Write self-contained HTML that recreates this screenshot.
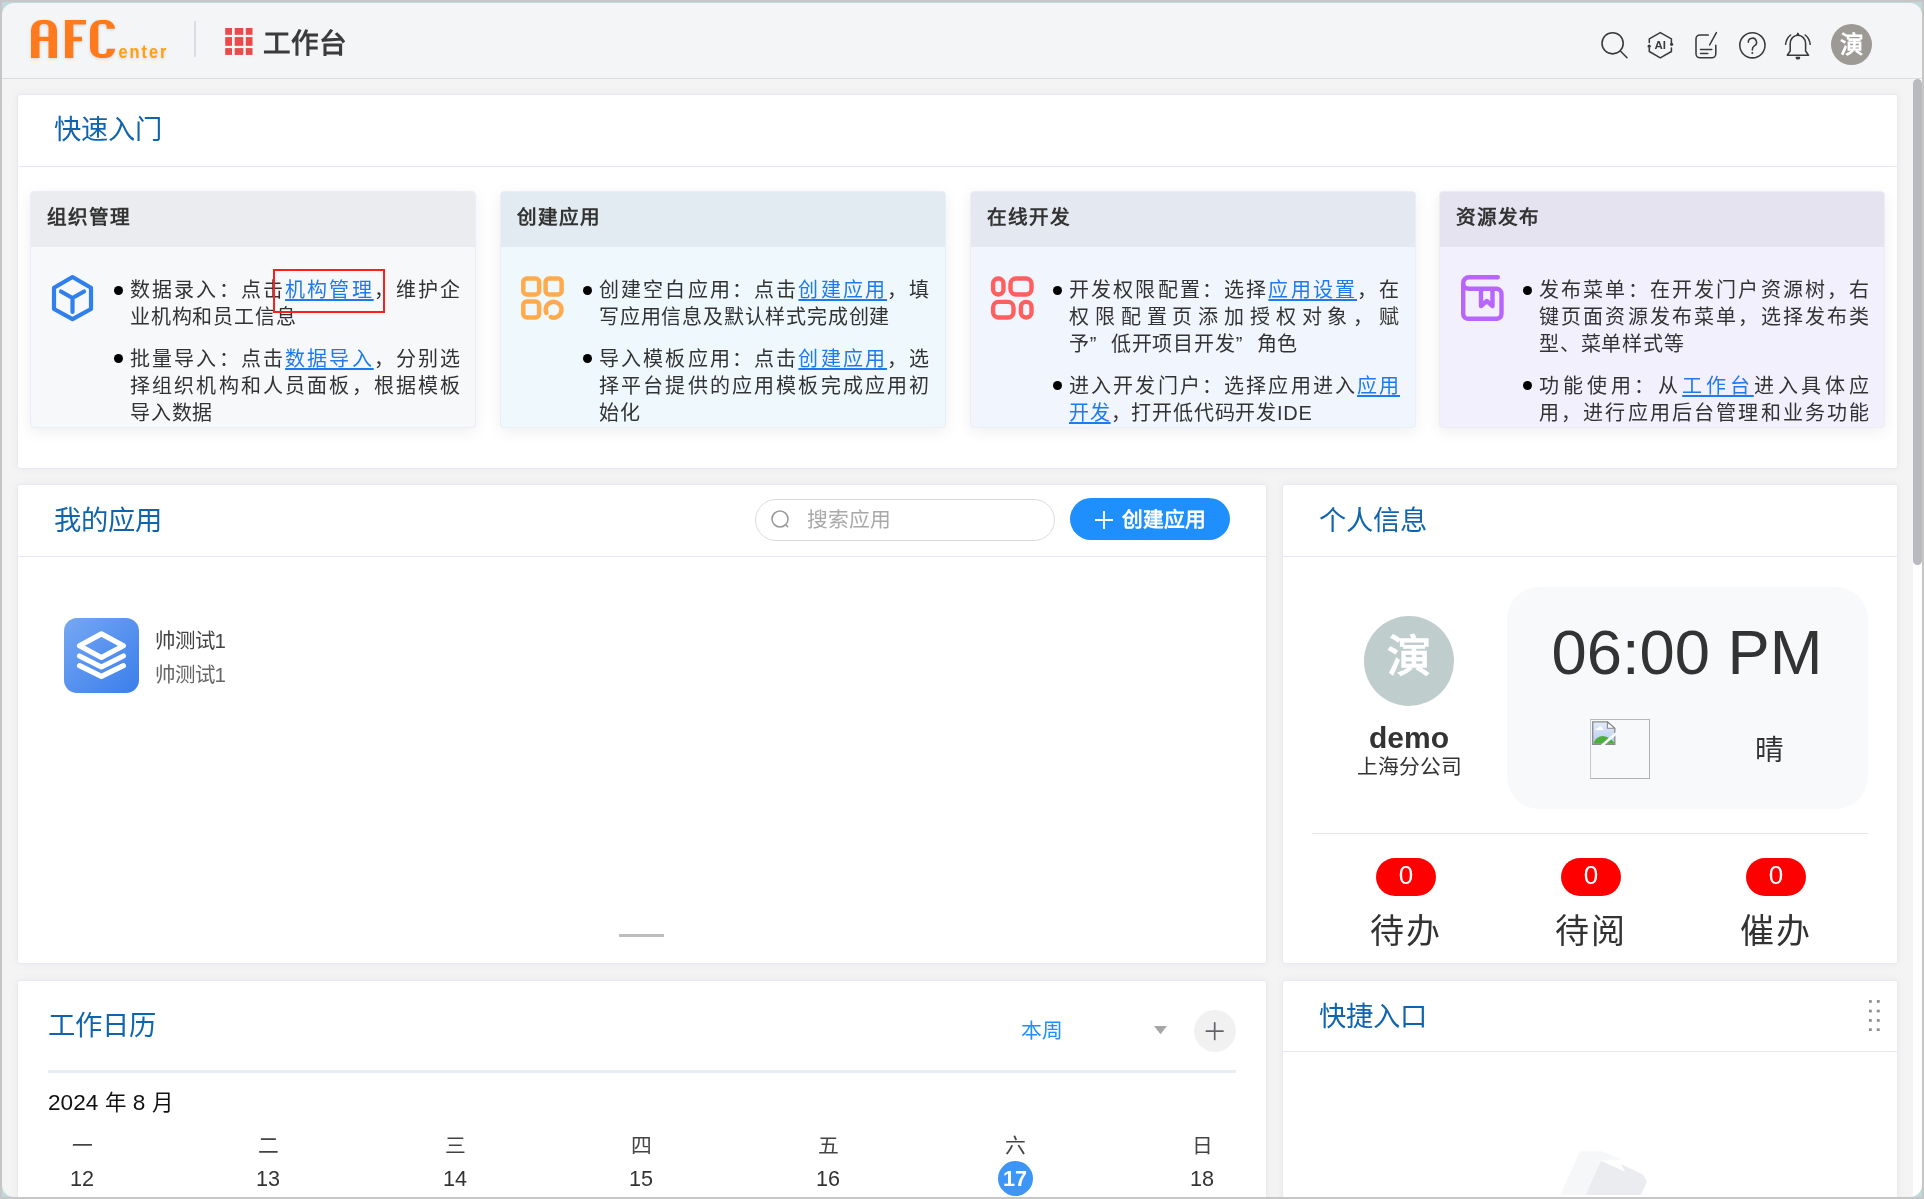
<!DOCTYPE html>
<html lang="zh-CN"><head><meta charset="utf-8">
<style>
*{box-sizing:border-box;margin:0;padding:0}
html,body{width:1924px;height:1199px;overflow:hidden;background:#c6c6c6;font-family:"Liberation Sans",sans-serif;color:#333}
.abs{position:absolute}
#win{position:absolute;left:2px;top:2px;width:1920px;height:1195px;background:#bfd9dc}
#inner{will-change:transform;position:absolute;left:0;top:0;width:1924px;height:1199px;background:#f4f4f4;clip-path:inset(3px 2px 2px 2px round 12px);overflow:hidden}
#hdr{position:absolute;left:0;top:0;width:1924px;height:79px;background:#f4f5f7;border-bottom:1px solid #dcdcdc;box-shadow:inset 0 4px 0 -1px #f7f7f7}
.panel{position:absolute;background:#fff;border:1px solid #e8eaf2;border-radius:3px;box-shadow:0 0 10px rgba(0,0,0,0.05)}
.ptitle{position:absolute;font-size:27.3px;line-height:30px;color:#0f64ae;white-space:nowrap}
.pline{position:absolute;height:1px;background:#e6e8f1}
.card{position:absolute;top:191px;width:446px;height:237px;border-radius:4px;overflow:hidden;box-shadow:0 4px 16px rgba(0,0,0,0.065);border:1px solid #eceef5}
.ch{position:absolute;left:0;top:0;right:0;height:55px;font-size:19.6px;letter-spacing:1px;font-weight:bold;line-height:51px;padding-left:16px;color:#333}
.txt{position:absolute;top:83px;width:331px;font-size:20px;letter-spacing:0.8px;line-height:27px;color:#333}
.ln{display:block;height:27px;white-space:nowrap;overflow:visible}
.j{text-align:justify;text-align-last:justify}
.gap{height:15px}
.q{display:inline-block;width:21px}
.bul{position:absolute;width:9px;height:9px;border-radius:50%;background:#000}
a{color:#1f7aee;text-decoration:underline;text-underline-offset:2.2px;text-decoration-thickness:2px}
</style></head><body>
<div id="win"></div>
<div id="inner">
  <div id="hdr">
    <svg class="abs" style="left:0;top:0;filter:drop-shadow(0 1px 1.5px rgba(0,0,0,0.13))" width="200" height="78" viewBox="0 0 200 78">
      <g fill="#ff7a1c">
        <path d="M31,58 V30 A10,10 0 0 1 41,20 H47 A10,10 0 0 1 57,30 V58 H48.5 V41 H39.5 V58 Z M39.5,36.7 H48.5 V28 A4,4 0 0 0 44.5,24 H43.5 A4,4 0 0 0 39.5,28 Z"/>
        <path d="M65,20 H86 V24.5 H73.3 V36.7 H82 V41.2 H73.3 V58 H65 Z"/>
        <path d="M100,20 H106 A9,9 0 0 1 115,29 V28.7 H106.7 V27 A3,3 0 0 0 103.7,24 H101.3 A3,3 0 0 0 98.3,27 V51 A3,3 0 0 0 101.3,54 H103.7 A3,3 0 0 0 106.7,51 V48.7 H115 V49 A9,9 0 0 1 106,58 H100 A10,10 0 0 1 90,48 V30 A10,10 0 0 1 100,20 Z"/>
      </g>
      <text transform="translate(118.5,58) scale(0.86,1)" x="0" y="0" font-family="Liberation Sans" font-weight="bold" font-size="19" fill="#ffa010" letter-spacing="2.3">enter</text>
    </svg>
    <div class="abs" style="left:194px;top:21px;width:2px;height:36px;background:#d9dbe6"></div>
    <svg class="abs" style="left:223px;top:26px" width="30" height="30" viewBox="0 0 30 30">
      <g fill="#e94b4b">
        <rect x="2.2" y="2" width="6.8" height="6.8"/><rect x="11.7" y="2" width="8.6" height="6.8"/><rect x="22.8" y="2" width="6.7" height="6.8"/>
        <rect x="2.2" y="11.1" width="6.8" height="8.7"/><rect x="11.7" y="11.1" width="8.6" height="8.7"/><rect x="22.8" y="11.1" width="6.7" height="8.7"/>
        <rect x="2.2" y="22.1" width="6.8" height="6.8"/><rect x="11.7" y="22.1" width="8.6" height="6.8"/><rect x="22.8" y="22.1" width="6.7" height="6.8"/>
      </g>
    </svg>
    <div class="abs" style="left:262.5px;top:26px;font-size:27.6px;line-height:36px;font-weight:bold;color:#3b3b3b;white-space:nowrap">工作台</div>
    <svg class="abs" style="left:1580px;top:0" width="340" height="78" viewBox="1580 0 340 78" fill="none" stroke="#3a3a3a" stroke-width="1.55" stroke-linecap="round" stroke-linejoin="round">
      <circle cx="1612.6" cy="43.3" r="10.6"/>
      <path d="M1620.6,51.3 L1627,57.7"/>
      <path d="M1649.3,42.5 V38.9 L1660.3,32.6 L1671.4,38.9 V43.5 M1671.4,48 V51.5 L1660.3,57.9 L1649.3,51.5 V48"/>
      <circle cx="1649.2" cy="46.2" r="1.6" fill="#3a3a3a" stroke="none"/>
      <circle cx="1671.6" cy="44.3" r="1.6" fill="#3a3a3a" stroke="none"/>
      <text x="1660.3" y="49" font-family="Liberation Sans" font-weight="bold" font-size="11.5" fill="#3a3a3a" stroke="none" text-anchor="middle">AI</text>
      <path d="M1708.3,35 H1700 A4,4 0 0 0 1696,39 V53.8 A4,4 0 0 0 1700,57.8 H1711.8 A4,4 0 0 0 1715.8,53.8 V45.2"/>
      <path d="M1709.6,45 L1716.4,32.6"/>
      <path d="M1700.5,49.5 H1711.8 M1700.5,53.4 H1707.8"/>
      <circle cx="1752.4" cy="45.3" r="12.6"/>
      <path d="M1748.3,42.3 A4.1,4.1 0 1 1 1754.3,45.9 C1752.9,46.8 1752.3,47.7 1752.3,49.9"/>
      <circle cx="1752.3" cy="52.9" r="1" fill="#3a3a3a" stroke="none"/>
      <path d="M1787.3,55.2 H1808.5 L1805.6,51 V43.5 A7.7,8.3 0 0 0 1790.2,43.5 V51 Z"/>
      <path d="M1796.9,35.3 L1797.9,33.4 L1798.9,35.3 Z" fill="#3a3a3a"/>
      <path d="M1796.3,57.4 A1.6,1.4 0 0 0 1799.5,57.4 Z" fill="#3a3a3a"/>
      <path d="M1785.6,44.3 A14,14 0 0 1 1790.6,35"/>
      <path d="M1810.2,44.3 A14,14 0 0 0 1805.2,35"/>
    </svg>
    <div class="abs" style="left:1831px;top:24px;width:41px;height:41px;border-radius:50%;background:#9d9994;color:#fff;font-size:23.5px;font-weight:bold;line-height:41px;text-align:center;text-indent:0px;padding-top:0.5px">演</div>
  </div>

  <!-- scrollbar -->
  <div class="abs" style="left:1913px;top:79px;width:9px;height:1120px;background:#fff"></div>
  <div class="abs" style="left:1913px;top:79px;width:9px;height:486px;background:#b9babf;border-radius:4.5px"></div>

  <!-- Panel 1 -->
  <div class="panel" style="left:17px;top:94px;width:1881px;height:375px"></div>
  <div class="ptitle" style="left:54px;top:115px">快速入门</div>
  <div class="pline" style="left:18px;top:166px;width:1879px"></div>

  <div class="card" style="left:30px;background:#f7f8fa">
    <div class="ch" style="background:#ebecef">组织管理</div>
  </div>
  <div class="card" style="left:500px;background:#eef8fd">
    <div class="ch" style="background:#e2ebf1">创建应用</div>
  </div>
  <div class="card" style="left:970px;background:#f1f5fd">
    <div class="ch" style="background:#e4e8f0">在线开发</div>
  </div>
  <div class="card" style="left:1439px;background:#f3f0fd">
    <div class="ch" style="background:#e5e3f0">资源发布</div>
  </div>

  <!-- card icons -->
  <svg class="abs" style="left:0;top:0" width="1924" height="440" fill="none" stroke-linejoin="round" stroke-linecap="round">
    <g stroke="#2f80ed" stroke-width="4.2">
      <path d="M72.5,277 L91,287.8 V309 L72.5,319.2 L54,309 V287.8 Z"/>
      <path d="M61,291.5 L72.5,298 L84,291.5 M72.5,298 V312"/>
    </g>
    <g stroke="#ffab4d" stroke-width="4.5">
      <rect x="523.3" y="278.6" width="15.8" height="15.9" rx="3.5"/>
      <rect x="545.6" y="278.6" width="16" height="15.9" rx="3.5"/>
      <rect x="523.3" y="301.6" width="15.8" height="15.9" rx="3.5"/>
      <path d="M546.4,313 A7.9,7.9 0 1 1 550.8,317.1"/>
    </g>
    <g stroke="#ff5f5f" stroke-width="4.4">
      <rect x="993.1" y="278.5" width="10.4" height="16" rx="5"/>
      <rect x="1010.5" y="278.5" width="21" height="16" rx="5.5"/>
      <rect x="993.1" y="301.9" width="20.4" height="15.6" rx="5.5"/>
      <rect x="1020.9" y="301.9" width="10.6" height="15.6" rx="5"/>
    </g>
    <g stroke="#b765fc" stroke-width="4.4">
      <path d="M1497.8,277.2 H1469 A5.8,5.8 0 0 0 1463.2,283 A5.8,5.8 0 0 0 1469,288.8 H1496.5 A5,5 0 0 1 1501.5,293.8 V313.8 A5,5 0 0 1 1496.5,318.8 H1468.2 A5,5 0 0 1 1463.2,313.8 V283"/>
      <path d="M1481,289 V306 L1486.8,301 L1492.5,306 V289"/>
    </g>
  </svg>

  <!-- card texts (clipped) -->
  <div class="abs" style="left:0;top:247px;width:1924px;height:180px;overflow:hidden">
    <div class="abs" style="left:0;top:-247px;width:1924px;height:440px">
      <div class="bul" style="left:114px;top:286px"></div>
      <div class="bul" style="left:114px;top:354px"></div>
      <div class="txt" style="left:130px;top:277px">
        <span class="ln j">数据录入：点击<a>机构管理</a>，维护企</span>
        <span class="ln">业机构和员工信息</span>
        <span class="ln gap"></span>
        <span class="ln j">批量导入：点击<a>数据导入</a>，分别选</span>
        <span class="ln j">择组织机构和人员面板，根据模板</span>
        <span class="ln">导入数据</span>
      </div>
      <div class="bul" style="left:583px;top:286px"></div>
      <div class="bul" style="left:583px;top:354px"></div>
      <div class="txt" style="left:599px;top:277px">
        <span class="ln j">创建空白应用：点击<a>创建应用</a>，填</span>
        <span class="ln">写应用信息及默认样式完成创建</span>
        <span class="ln gap"></span>
        <span class="ln j">导入模板应用：点击<a>创建应用</a>，选</span>
        <span class="ln j">择平台提供的应用模板完成应用初</span>
        <span class="ln">始化</span>
      </div>
      <div class="bul" style="left:1053px;top:286px"></div>
      <div class="bul" style="left:1053px;top:381px"></div>
      <div class="txt" style="left:1069px;top:277px">
        <span class="ln j">开发权限配置：选择<a>应用设置</a>，在</span>
        <span class="ln j">权限配置页添加授权对象，赋</span>
        <span class="ln">予<span class="q">”</span>低开项目开发<span class="q">”</span>角色</span>
        <span class="ln gap"></span>
        <span class="ln j">进入开发门户：选择应用进入<a>应用</a></span>
        <span class="ln"><a>开发</a>，打开低代码开发IDE</span>
      </div>
      <div class="bul" style="left:1523px;top:286px"></div>
      <div class="bul" style="left:1523px;top:381px"></div>
      <div class="txt" style="left:1539px;top:277px">
        <span class="ln j">发布菜单：在开发门户资源树，右</span>
        <span class="ln j">键页面资源发布菜单，选择发布类</span>
        <span class="ln">型、菜单样式等</span>
        <span class="ln gap"></span>
        <span class="ln j">功能使用：从<a>工作台</a>进入具体应</span>
        <span class="ln j">用，进行应用后台管理和业务功能</span>
      </div>
    </div>
  </div>
  <!-- red annotation box -->
  <div class="abs" style="left:272.5px;top:268.5px;width:112px;height:44.5px;border:2.2px solid #ff1e1e"></div>

  <!-- Panel 2: my apps -->
  <div class="panel" style="left:17px;top:484px;width:1250px;height:480px"></div>
  <div class="ptitle" style="left:54px;top:506px">我的应用</div>
  <div class="pline" style="left:18px;top:556px;width:1248px"></div>
  <div class="abs" style="left:755px;top:499px;width:300px;height:42px;border:1px solid #dcdcdc;border-radius:21px;background:#fff"></div>
  <svg class="abs" style="left:768px;top:507px" width="26" height="26" viewBox="0 0 26 26" fill="none" stroke="#9a9a9a" stroke-width="1.6" stroke-linecap="round"><circle cx="12" cy="12" r="8"/><path d="M17.8,17.8 L19.6,19.6"/></svg>
  <div class="abs" style="left:807px;top:505.5px;font-size:20.8px;line-height:28px;color:#a9a9a9;white-space:nowrap">搜索应用</div>
  <div class="abs" style="left:1070px;top:498px;width:160px;height:42px;border-radius:21px;background:#1e8ffc"></div>
  <svg class="abs" style="left:1093px;top:508.5px" width="22" height="22" viewBox="0 0 22 22" stroke="#fff" stroke-width="1.9"><path d="M11,2 V20 M2,11 H20"/></svg>
  <div class="abs" style="left:1121.5px;top:505.5px;font-size:20.8px;line-height:28px;color:#fff;font-weight:bold;white-space:nowrap">创建应用</div>

  <div class="abs" style="left:64px;top:618px;width:75px;height:75px;border-radius:13px;background:linear-gradient(135deg,#76a9f4 0%,#5792ef 50%,#3a7fea 100%)"></div>
  <svg class="abs" style="left:64px;top:618px" width="75" height="75" viewBox="0 0 75 75" fill="none" stroke="#fff" stroke-width="5.2" stroke-linejoin="round" stroke-linecap="round">
    <path d="M37.4,15.9 L59.4,27.7 L37.4,39.5 L15.5,27.7 Z"/>
    <path d="M15.5,38 L37.4,49 L59.4,38"/>
    <path d="M15.5,47.6 L37.4,58.3 L59.4,47.6"/>
  </svg>
  <div class="abs" style="left:154.5px;top:626.5px;font-size:20.5px;line-height:28px;color:#444;white-space:nowrap">帅测试<span style="display:inline-block">1</span></div>
  <div class="abs" style="left:154.5px;top:661px;font-size:20.5px;line-height:28px;color:#666;white-space:nowrap">帅测试<span style="display:inline-block">1</span></div>
  <div class="abs" style="left:619px;top:934px;width:45px;height:3px;background:#bdbdbd"></div>

  <!-- Panel 3: personal info -->
  <div class="panel" style="left:1282px;top:484px;width:616px;height:480px"></div>
  <div class="ptitle" style="left:1319px;top:505.5px">个人信息</div>
  <div class="pline" style="left:1283px;top:556px;width:614px"></div>
  <div class="abs" style="left:1364px;top:616px;width:90px;height:90px;border-radius:50%;background:#bfcdcd;color:#fff;font-size:44px;font-weight:bold;line-height:82px;text-align:center">演</div>
  <div class="abs" style="left:1309px;top:719.5px;width:200px;text-align:center;font-size:30px;line-height:36px;font-weight:bold;color:#333">demo</div>
  <div class="abs" style="left:1309px;top:753px;width:200px;text-align:center;font-size:20.8px;line-height:28px;color:#333">上海分公司</div>
  <div class="abs" style="left:1507px;top:587px;width:361px;height:222px;border-radius:32px;background:#f8f9fb"></div>
  <div class="abs" style="left:1507px;top:615px;width:360px;text-align:center;font-size:63.3px;line-height:74px;color:#333;white-space:nowrap">06:00 PM</div>
  <div class="abs" style="left:1590px;top:719px;width:60px;height:60px;border:1px solid #b0b0b0;border-left-color:#c8c8c8;border-top-color:#b8b8b8"></div>
  <svg class="abs" style="left:1590px;top:720px" width="30" height="30" viewBox="0 0 30 30">
    <defs><linearGradient id="sky" x1="0" y1="0" x2="0" y2="1"><stop offset="0" stop-color="#e3ecf9"/><stop offset="1" stop-color="#b3c9ee"/></linearGradient></defs>
    <path d="M2.7,1.9 H17.4 L24.8,8.3 V24.4 H2.7 Z" fill="url(#sky)" stroke="#8a8a8a" stroke-width="1.3"/>
    <path d="M17.4,1.9 V8.3 H24.8 Z" fill="#fff" stroke="#8a8a8a" stroke-width="1.1" stroke-linejoin="round"/>
    <path d="M5.3,10 C5.5,8.6 6.8,8 8,8.4 C8.6,6 11.6,5.8 12.3,8.3 C13.2,8.5 13.5,9.3 13.4,10 Z" fill="#fff"/>
    <path d="M3.4,23.8 C5,18.5 9.5,15.6 14,16.2 C18,16.8 21.5,19.5 24.2,22.4 V23.8 Z" fill="#4eae3d"/>
    <path d="M11.2,26.2 L26.2,13.2" stroke="#f9fafc" stroke-width="2.6"/>
  </svg>
  <div class="abs" style="left:1755px;top:733px;font-size:28.6px;line-height:34px;color:#333;white-space:nowrap">晴</div>
  <div class="pline" style="left:1312px;top:833px;width:556px"></div>
  <div class="abs" style="left:1376px;top:858px;width:60px;height:38px;border-radius:19px;background:#ff0000;color:#fff;font-size:26px;line-height:35px;text-align:center">0</div>
  <div class="abs" style="left:1561px;top:858px;width:60px;height:38px;border-radius:19px;background:#ff0000;color:#fff;font-size:26px;line-height:35px;text-align:center">0</div>
  <div class="abs" style="left:1746px;top:858px;width:60px;height:38px;border-radius:19px;background:#ff0000;color:#fff;font-size:26px;line-height:35px;text-align:center">0</div>
  <div class="abs" style="left:1305px;top:910px;width:200px;text-align:center;font-size:34px;letter-spacing:2.5px;text-indent:2.5px;line-height:42px;color:#333">待办</div>
  <div class="abs" style="left:1490px;top:910px;width:200px;text-align:center;font-size:34px;letter-spacing:2.5px;text-indent:2.5px;line-height:42px;color:#333">待阅</div>
  <div class="abs" style="left:1675px;top:910px;width:200px;text-align:center;font-size:34px;letter-spacing:2.5px;text-indent:2.5px;line-height:42px;color:#333">催办</div>

  <!-- Panel 4: calendar -->
  <div class="panel" style="left:17px;top:980px;width:1250px;height:240px"></div>
  <div class="ptitle" style="left:48px;top:1011px">工作日历</div>
  <div class="abs" style="left:1021px;top:1017px;font-size:20.8px;line-height:28px;color:#1e8ffc;white-space:nowrap">本周</div>
  <svg class="abs" style="left:1152px;top:1025px" width="16" height="12" viewBox="0 0 16 12"><path d="M2,1 H15 L8.5,9.2 Z" fill="#a6a6a6"/></svg>
  <div class="abs" style="left:1194px;top:1010px;width:42px;height:42px;border-radius:50%;background:#f1f1f1"></div>
  <svg class="abs" style="left:1203px;top:1019px" width="24" height="24" viewBox="0 0 24 24" stroke="#606368" stroke-width="1.7" stroke-linecap="round"><path d="M11.7,3.9 V20.5 M3.4,12.2 H20"/></svg>
  <div class="abs" style="left:48px;top:1070px;width:1188px;height:3px;background:#e9edf4"></div>
  <div class="abs" style="left:48px;top:1089px;font-size:22.6px;line-height:28px;color:#111;white-space:nowrap">2024 <span style="font-size:21.5px">年</span> 8 <span style="font-size:21.5px">月</span></div>
  <div class="abs" style="left:0;top:1132px;width:1300px;font-size:20.8px;line-height:28px;color:#444">
    <span class="abs" style="left:42px;width:80px;text-align:center">一</span>
    <span class="abs" style="left:228px;width:80px;text-align:center">二</span>
    <span class="abs" style="left:415px;width:80px;text-align:center">三</span>
    <span class="abs" style="left:601px;width:80px;text-align:center">四</span>
    <span class="abs" style="left:788px;width:80px;text-align:center">五</span>
    <span class="abs" style="left:975px;width:80px;text-align:center">六</span>
    <span class="abs" style="left:1162px;width:80px;text-align:center">日</span>
  </div>
  <div class="abs" style="left:998px;top:1161px;width:35px;height:35px;border-radius:50%;background:#3d95f5"></div>
  <div class="abs" style="left:0;top:1164px;width:1300px;font-size:21.6px;line-height:30px;color:#333">
    <span class="abs" style="left:42px;width:80px;text-align:center">12</span>
    <span class="abs" style="left:228px;width:80px;text-align:center">13</span>
    <span class="abs" style="left:415px;width:80px;text-align:center">14</span>
    <span class="abs" style="left:601px;width:80px;text-align:center">15</span>
    <span class="abs" style="left:788px;width:80px;text-align:center">16</span>
    <span class="abs" style="left:975px;width:80px;text-align:center;color:#fff;font-weight:bold">17</span>
    <span class="abs" style="left:1162px;width:80px;text-align:center">18</span>
  </div>

  <!-- Panel 5: shortcuts -->
  <div class="panel" style="left:1282px;top:980px;width:616px;height:240px"></div>
  <div class="ptitle" style="left:1319px;top:1001.5px">快捷入口</div>
  <div class="pline" style="left:1283px;top:1051px;width:614px"></div>
  <svg class="abs" style="left:1864px;top:996px" width="20" height="40" viewBox="0 0 20 40" fill="#8c8c8c"><rect x="5" y="4.1" width="2.8" height="2.7"/><rect x="12.8" y="4.1" width="2.9" height="2.7"/><rect x="5" y="13.7" width="2.8" height="2.7"/><rect x="12.8" y="13.7" width="2.9" height="2.7"/><rect x="5" y="23.1" width="2.8" height="2.7"/><rect x="12.8" y="23.1" width="2.9" height="2.7"/><rect x="5" y="32.3" width="2.8" height="2.7"/><rect x="12.8" y="32.3" width="2.9" height="2.7"/></svg>
  <svg class="abs" style="left:1550px;top:1140px" width="110" height="60" viewBox="1550 1140 110 60">
    <path d="M1580,1151.2 H1601.5 L1621.5,1159.6 L1601,1160.8 L1585.4,1195 H1560.4 Z" fill="#f6f7f9"/>
    <path d="M1601,1160.8 L1625,1171.7 L1621.2,1164.2 L1642.9,1174.6 L1647,1181.7 L1640.8,1195 H1585.4 Z" fill="#ebecf0"/>
  </svg>
</div>
</body></html>
